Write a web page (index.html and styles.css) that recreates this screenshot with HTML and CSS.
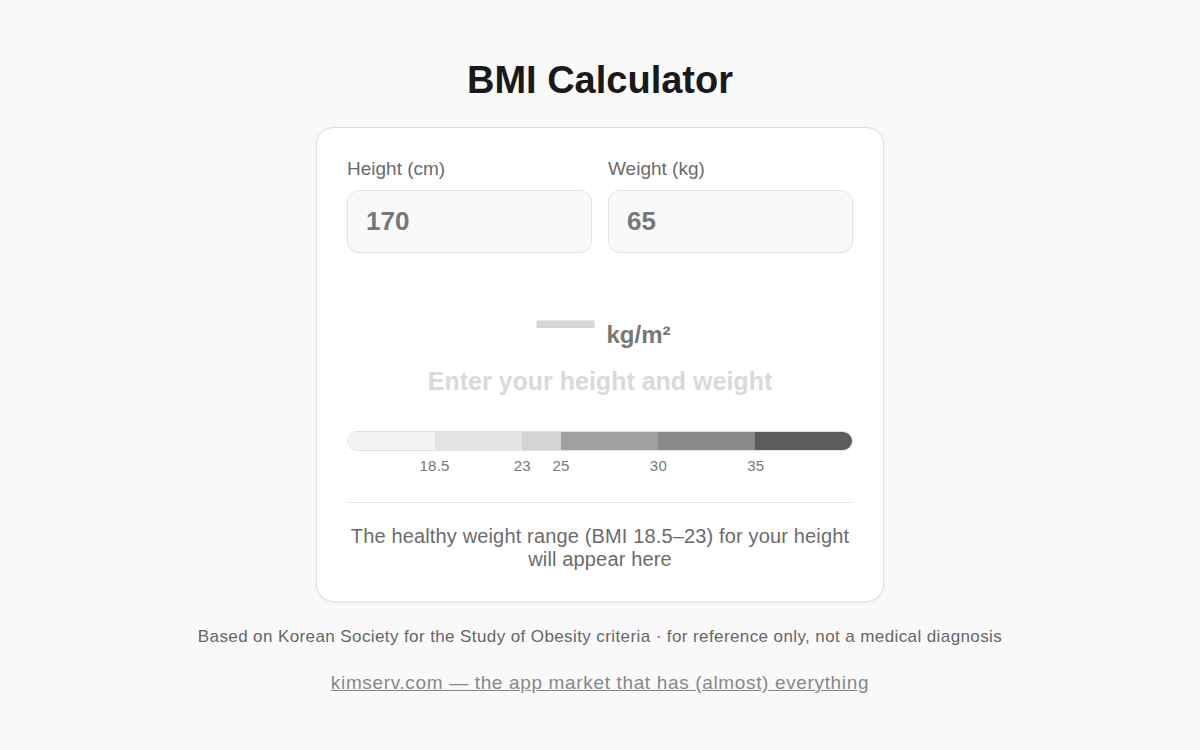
FILE: index.html
```html
<!DOCTYPE html>
<html lang="en">
<head>
    <meta charset="UTF-8">
    <meta name="viewport" content="width=device-width, initial-scale=1.0">
    <title>BMI Calculator</title>
    <link rel="stylesheet" href="styles.css">
</head>
<body>
    <main class="page">
        <h1 class="title">BMI Calculator</h1>

        <section class="card">
            <div class="fields">
                <label class="field">
                    <span class="field-label">Height (cm)</span>
                    <input class="field-input" type="text" inputmode="decimal" value="170">
                </label>
                <label class="field">
                    <span class="field-label">Weight (kg)</span>
                    <input class="field-input" type="text" inputmode="decimal" value="65">
                </label>
            </div>

            <div class="result">
                <div class="result-value"><span class="bmi">—</span><span class="unit">kg/m²</span></div>
                <div class="result-label">Enter your height and weight</div>
            </div>

            <!-- scale runs from BMI 14 to 40 -->
            <div class="scale">
                <div class="scale-bar">
                    <span class="seg seg-under"></span>
                    <span class="seg seg-normal"></span>
                    <span class="seg seg-pre"></span>
                    <span class="seg seg-ob1"></span>
                    <span class="seg seg-ob2"></span>
                    <span class="seg seg-ob3"></span>
                </div>
                <div class="scale-ticks">
                    <span class="tick" style="left: 17.31%">18.5</span>
                    <span class="tick" style="left: 34.62%">23</span>
                    <span class="tick" style="left: 42.31%">25</span>
                    <span class="tick" style="left: 61.54%">30</span>
                    <span class="tick" style="left: 80.77%">35</span>
                </div>
            </div>

            <p class="healthy">The healthy weight range (BMI 18.5–23) for your height will appear here</p>
        </section>

        <p class="note">Based on Korean Society for the Study of Obesity criteria · for reference only, not a medical diagnosis</p>
        <a class="promo" href="#">kimserv.com — the app market that has (almost) everything</a>
    </main>
</body>
</html>
```

FILE: styles.css
```css
body {
    margin: 0;
    background-color: #f9f9f9;
    font-family: "Liberation Sans", Arial, Helvetica, sans-serif;
    color: #1a1a1a;
}

.page {
    display: flex;
    flex-direction: column;
    align-items: center;
    padding-top: 57px;
}

.title {
    margin: 0 0 24px;
    font-size: 38px;
    line-height: 46px;
    font-weight: 700;
    color: #1a1a1a;
}

.card {
    box-sizing: border-box;
    width: 568px;
    padding: 30px;
    background-color: #fff;
    border: 1px solid #e0e0e0;
    border-radius: 18px;
    box-shadow: 0 1px 4px rgba(0, 0, 0, 0.05);
}

.fields {
    display: grid;
    grid-template-columns: 1fr 1fr;
    gap: 16px;
}

.field {
    display: flex;
    flex-direction: column;
}

.field-label {
    font-size: 19px;
    line-height: 22px;
    color: #6b6b6b;
    margin-bottom: 10px;
}

.field-input {
    box-sizing: border-box;
    width: 100%;
    height: 63px;
    padding: 0 18px;
    font-family: inherit;
    font-size: 26px;
    font-weight: 700;
    color: #777;
    background-color: #f9f9f9;
    border: 1.5px solid #e3e3e3;
    border-radius: 12px;
    outline: none;
}

.result {
    margin-top: 39px;
    text-align: center;
}

.result-value {
    padding-left: 8px;
    font-size: 56px;
    line-height: 56px;
}

/* empty state: a thick grey dash sitting a little above the unit */
.bmi {
    font-weight: 700;
    color: #d6d6d6;
    -webkit-text-stroke: 2px #d6d6d6;
    vertical-align: 4px;
}

.unit {
    margin-left: 13px;
    font-size: 24px;
    line-height: 1;
    font-weight: 700;
    color: #777;
}

.result-label {
    margin-top: 13px;
    font-size: 25px;
    line-height: 32px;
    font-weight: 700;
    color: #d9d9d9;
}

.scale {
    margin-top: 34px;
}

.scale-bar {
    display: flex;
    height: 20px;
    box-sizing: border-box;
    border: 1px solid #e0e0e0;
    border-radius: 10px;
    overflow: hidden;
}

.seg { height: 100%; }
.seg-under  { width: 17.31%; background-color: #f4f4f4; }
.seg-normal { width: 17.31%; background-color: #e4e4e4; }
.seg-pre    { width: 7.69%;  background-color: #d4d4d4; }
.seg-ob1    { width: 19.23%; background-color: #a0a0a0; }
.seg-ob2    { width: 19.23%; background-color: #8a8a8a; }
.seg-ob3    { flex: 1;       background-color: #5c5c5c; }

.scale-ticks {
    position: relative;
    height: 17px;
    margin-top: 6px;
}

.tick {
    position: absolute;
    top: 0;
    transform: translateX(-50%);
    font-size: 15px;
    line-height: 17px;
    letter-spacing: 0.2px;
    color: #777;
}

.healthy {
    margin: 28px 0 0;
    padding-top: 22px;
    border-top: 1px solid #e5e5e5;
    text-align: center;
    font-size: 20px;
    line-height: 23px;
    letter-spacing: 0.15px;
    color: #6b6b6b;
}

.note {
    margin: 25px 0 0;
    font-size: 17px;
    line-height: 19px;
    letter-spacing: 0.4px;
    color: #666;
}

.promo {
    margin-top: 26px;
    font-size: 19px;
    line-height: 21px;
    letter-spacing: 0.65px;
    color: #888;
    text-decoration: underline;
}
```
